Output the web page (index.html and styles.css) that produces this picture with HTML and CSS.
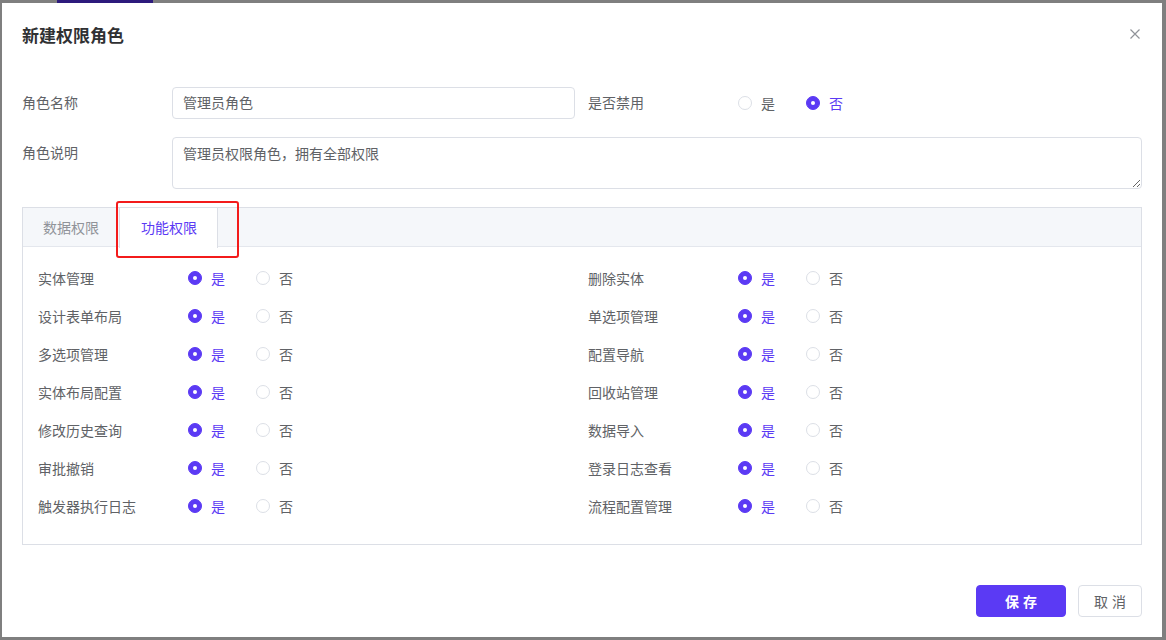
FILE: index.html
```html
<!DOCTYPE html>
<html lang="zh">
<head>
<meta charset="utf-8">
<title>新建权限角色</title>
<link rel="stylesheet" href="styles.css">
</head>
<body>
<div class="topbar"><span class="topbar-active"></span></div>
<div class="dialog">
  <div class="dialog-header">
    <span class="dialog-title">新建权限角色</span>
    <span class="close" aria-label="关闭">
      <svg width="12" height="12" viewBox="0 0 12 12"><path d="M1.5 1.5 L10.5 10.5 M10.5 1.5 L1.5 10.5" stroke="#909399" stroke-width="1.2" fill="none"/></svg>
    </span>
  </div>
  <div class="dialog-body">
    <div class="form-row two">
      <div class="field">
        <label class="label">角色名称</label>
        <div class="input">管理员角色</div>
      </div>
      <div class="field">
        <label class="label">是否禁用</label>
        <div class="radios">
          <span class="radio"><i class="dot"></i><span class="rtext">是</span></span>
          <span class="radio checked"><i class="dot"></i><span class="rtext">否</span></span>
        </div>
      </div>
    </div>
    <div class="form-row">
      <div class="field top">
        <label class="label">角色说明</label>
        <textarea class="textarea">管理员权限角色，拥有全部权限</textarea>
      </div>
    </div>
    <div class="tabs">
      <div class="tab-head">
        <span class="tab">数据权限</span>
        <span class="tab active">功能权限</span>
      </div>
      <div class="highlight"></div>
      <div class="tab-body">
        <div class="perm"><span class="plabel">实体管理</span><span class="radio checked"><i class="dot"></i><span class="rtext">是</span></span><span class="radio"><i class="dot"></i><span class="rtext">否</span></span></div>
        <div class="perm"><span class="plabel">删除实体</span><span class="radio checked"><i class="dot"></i><span class="rtext">是</span></span><span class="radio"><i class="dot"></i><span class="rtext">否</span></span></div>
        <div class="perm"><span class="plabel">设计表单布局</span><span class="radio checked"><i class="dot"></i><span class="rtext">是</span></span><span class="radio"><i class="dot"></i><span class="rtext">否</span></span></div>
        <div class="perm"><span class="plabel">单选项管理</span><span class="radio checked"><i class="dot"></i><span class="rtext">是</span></span><span class="radio"><i class="dot"></i><span class="rtext">否</span></span></div>
        <div class="perm"><span class="plabel">多选项管理</span><span class="radio checked"><i class="dot"></i><span class="rtext">是</span></span><span class="radio"><i class="dot"></i><span class="rtext">否</span></span></div>
        <div class="perm"><span class="plabel">配置导航</span><span class="radio checked"><i class="dot"></i><span class="rtext">是</span></span><span class="radio"><i class="dot"></i><span class="rtext">否</span></span></div>
        <div class="perm"><span class="plabel">实体布局配置</span><span class="radio checked"><i class="dot"></i><span class="rtext">是</span></span><span class="radio"><i class="dot"></i><span class="rtext">否</span></span></div>
        <div class="perm"><span class="plabel">回收站管理</span><span class="radio checked"><i class="dot"></i><span class="rtext">是</span></span><span class="radio"><i class="dot"></i><span class="rtext">否</span></span></div>
        <div class="perm"><span class="plabel">修改历史查询</span><span class="radio checked"><i class="dot"></i><span class="rtext">是</span></span><span class="radio"><i class="dot"></i><span class="rtext">否</span></span></div>
        <div class="perm"><span class="plabel">数据导入</span><span class="radio checked"><i class="dot"></i><span class="rtext">是</span></span><span class="radio"><i class="dot"></i><span class="rtext">否</span></span></div>
        <div class="perm"><span class="plabel">审批撤销</span><span class="radio checked"><i class="dot"></i><span class="rtext">是</span></span><span class="radio"><i class="dot"></i><span class="rtext">否</span></span></div>
        <div class="perm"><span class="plabel">登录日志查看</span><span class="radio checked"><i class="dot"></i><span class="rtext">是</span></span><span class="radio"><i class="dot"></i><span class="rtext">否</span></span></div>
        <div class="perm"><span class="plabel">触发器执行日志</span><span class="radio checked"><i class="dot"></i><span class="rtext">是</span></span><span class="radio"><i class="dot"></i><span class="rtext">否</span></span></div>
        <div class="perm"><span class="plabel">流程配置管理</span><span class="radio checked"><i class="dot"></i><span class="rtext">是</span></span><span class="radio"><i class="dot"></i><span class="rtext">否</span></span></div>
      </div>
    </div>
  </div>
  <div class="dialog-footer">
    <button class="btn primary">保存</button>
    <button class="btn">取消</button>
  </div>
</div>
</body>
</html>
```

FILE: styles.css
```css
* { box-sizing: border-box; }
html, body { margin: 0; padding: 0; }
body {
  background: #7f7f7f;
  font-family: "Noto Sans CJK SC", "Noto Sans", sans-serif;
  font-size: 14px;
  color: #606266;
  width: 1166px;
  height: 640px;
  overflow: hidden;
}
.topbar { height: 3px; display: flex; }
.topbar-active { margin-left: 57px; width: 96px; height: 3px; background: #2d1a7c; }
.dialog {
  margin-left: 2px;
  width: 1160px;
  height: 634px;
  background: #fff;
  display: flex;
  flex-direction: column;
  position: relative;
}
.dialog-header {
  padding: 20px 20px 20px 20px;
  height: 64px;
  display: flex;
  align-items: center;
  justify-content: space-between;
}
.dialog-title {
  font-size: 17px;
  font-weight: 700;
  color: #303133;
  line-height: 24px;
}
.close { display: flex; margin-right: 1px; margin-top: -2px; }
.dialog-body { padding: 20px 20px 0 20px; }
.form-row { margin-bottom: 18px; }
.form-row.two { display: grid; grid-template-columns: 553px 1fr; column-gap: 13px; }
.field { display: flex; align-items: center; height: 32px; }
.field.top { align-items: flex-start; height: auto; }
.label {
  width: 150px;
  flex: none;
  color: #606266;
  line-height: 30px;
  height: 32px;
}
.input {
  flex: 1;
  height: 32px;
  border: 1px solid #dcdfe6;
  border-radius: 4px;
  padding: 0 10px 1px;
  line-height: 29px;
  color: #606266;
}
.textarea {
  flex: 1;
  height: 52px;
  border: 1px solid #dcdfe6;
  border-radius: 4px;
  padding: 4px 10px;
  font-family: inherit;
  font-size: 14px;
  line-height: 22px;
  color: #606266;
  resize: vertical;
  display: block;
  margin: 0;
}
.radios { display: flex; align-items: center; }
.radio {
  display: inline-flex;
  align-items: center;
  margin-right: 31px;
  color: #606266;
  line-height: 20px;
}
.dot {
  width: 14px;
  height: 14px;
  border-radius: 50%;
  border: 1px solid #dcdfe6;
  background: #fff;
  display: inline-block;
  position: relative;
  flex: none;
}
.rtext { padding-left: 9px; margin-top: -1px; }
.radio.checked .dot { border-color: #5b3af4; background: #5b3af4; }
.radio.checked .dot::after {
  content: "";
  position: absolute;
  width: 4px;
  height: 4px;
  border-radius: 50%;
  background: #fff;
  left: 4px;
  top: 4px;
}
.radio.checked .rtext { color: #5b3af4; }
.tabs {
  border: 1px solid #dcdfe6;
  position: relative;
  height: 338px;
}
.tab-head {
  height: 39px;
  background: #f5f7fa;
  border-bottom: 1px solid #e4e7ed;
  display: flex;
}
.tab {
  padding: 0 20px;
  line-height: 38px;
  color: #909399;
  border-left: 1px solid transparent;
  border-right: 1px solid transparent;
}
.tab:first-child { border-left: 0; padding-right: 19px; }
.tab.active {
  background: #fff;
  color: #5b3af4;
  border-left-color: #dcdfe6;
  border-right-color: #dcdfe6;
  height: 40px;
  padding: 0 20px 0 21px;
}
.highlight {
  position: absolute;
  left: 93px;
  top: -7px;
  width: 123px;
  height: 57px;
  border: 2px solid #f31b1b;
  border-radius: 3px;
  pointer-events: none;
}
.tab-body {
  padding: 12px 15px 0 15px;
  display: grid;
  grid-template-columns: 1fr 1fr;
  column-gap: 12px;
}
.perm {
  height: 38px;
  display: flex;
  align-items: center;
}
.plabel { width: 150px; flex: none; color: #606266; }
.dialog-footer {
  margin-top: auto;
  padding: 0 20px 20px 0;
  display: flex;
  justify-content: flex-end;
  gap: 12px;
}
.btn {
  height: 32px;
  width: 64px;
  border: 1px solid #dcdfe6;
  border-radius: 4px;
  background: #fff;
  color: #606266;
  font-family: inherit;
  font-size: 14px;
  letter-spacing: 4px;
  padding: 0 0 0 4px;
  cursor: pointer;
}
.btn.primary {
  width: 90px;
  background: #5b3af4;
  border-color: #5b3af4;
  color: #fff;
  font-weight: 700;
}
```
